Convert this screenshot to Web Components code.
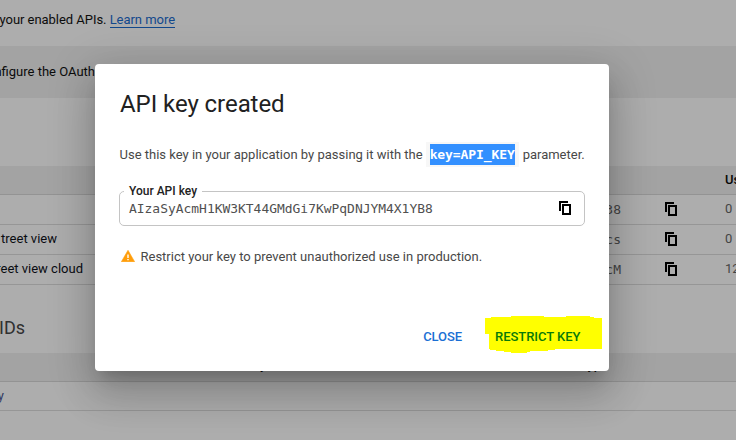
<!DOCTYPE html>
<html lang="en"><head><meta charset="utf-8"><title>API key created</title>
<style>html,body{margin:0;width:736px;height:440px;overflow:hidden;background:#adadad;font-family:Roboto,sans-serif}</style></head>
<body><credentials-app></credentials-app>
<script>
const define=(name,html)=>customElements.define(name,class extends HTMLElement{
  constructor(){super();const t=document.createElement('template');t.innerHTML=html;this.attachShadow({mode:'open'}).append(t.content.cloneNode(true));}
});
define('copy-icon',`<style>:host{display:block;width:12px;height:14px}svg{display:block}</style>
<svg width="12" height="14" viewBox="0 0 12 14" fill="none" stroke="#000" stroke-width="2" shape-rendering="crispEdges"><path d="M1 10V1H9"/><path d="M4 4H11V13H4Z"/></svg>`);
define('key-row',`<style>:host{box-sizing:border-box;display:flex;align-items:center;height:30px;padding-bottom:1px;border-bottom:1px solid #969696;font-size:13px;color:#0c0c0c}
.name{display:flex;justify-content:flex-end;white-space:nowrap;width:var(--w,83px);margin-right:auto;color:var(--nc,#0a0c12);padding-bottom:1px}
.key{font:13px "DejaVu Sans Mono",monospace;width:32px;display:flex;justify-content:flex-end;color:#444;margin-right:44px}
copy-icon{margin-right:48px;}
.use{width:11px;white-space:nowrap;color:#444;padding-bottom:1px}</style>
<span class="name"><slot name="name"></slot></span><span class="key"><slot name="key"></slot></span><copy-icon></copy-icon><span class="use"><slot name="use"></slot></span>`);
define('table-head',`<style>:host{display:flex;height:28px;border-bottom:1px solid #939393;background:#a3a3a3;font-size:13px;font-weight:500;color:#080808;line-height:var(--lh,27px);white-space:nowrap}</style><slot></slot>`);
define('credentials-page',`<style>:host{display:block;width:736px;height:440px;overflow:hidden;font-size:13px;color:#0c0c0c}
.intro{height:46px;line-height:40px;white-space:nowrap;letter-spacing:-.04px;text-indent:-.5px}.intro a{color:#12488c;border-bottom:1px solid #12488c}
.banner{height:52px;background:#a3a3a3;line-height:52px}.banner span,.ids span{display:flex;justify-content:flex-end;width:95px;white-space:nowrap}
.gap{height:68px}.ids{height:68px;font-size:18px;line-height:86px;color:#303030}.ids span{width:25px}
.usage{margin-left:725px}.date{margin-left:260px}.type{margin-left:321px}
.client{height:28px;border-bottom:1px solid #969696;line-height:28px;color:#323a62}.client span{display:flex;justify-content:flex-end;width:4px}</style>
<div class="intro">your enabled APIs. <a>Learn more</a></div>
<div class="banner"><span>nfigure the OAuth</span></div><div class="gap"></div>
<table-head><span class="usage">Us</span></table-head>
<key-row><span slot="key">38</span><span slot="use">0</span></key-row>
<key-row style="--w:57px"><span slot="name">treet view</span><span slot="key">cs</span><span slot="use">0</span></key-row>
<key-row><span slot="name">reet view cloud</span><span slot="key">cM</span><span slot="use">12</span></key-row>
<div class="ids"><span>IDs</span></div>
<table-head style="--lh:23px"><span class="date">y</span><span class="type">yp</span></table-head>
<div class="client"><span>y</span></div>`);
define('key-field',`<style>:host{display:block}
fieldset{box-sizing:border-box;display:flex;width:466px;height:42px;margin:0;border:1px solid #c4c4c4;border-radius:5px;padding:0 13px 0 9px;min-width:0}
legend{font-size:12px;font-weight:500;line-height:14px;padding:0 5px 0 5px;margin-left:-5px;color:#222;}
.in{display:flex;align-items:center;justify-content:space-between;width:100%;height:20px}
.v{font:12.95px "DejaVu Sans Mono",monospace;color:#505050;padding-top:1px}</style>
<fieldset><legend><slot name="label"></slot></legend><div class="in"><span class="v"><slot></slot></span><copy-icon></copy-icon></div></fieldset>`);
define('marked-button',`<style>:host{display:grid;width:117px;height:38px;font-size:13px;font-weight:500;color:#087a08}
svg,span{grid-area:1/1}span{padding:13px 0 0 10px;line-height:16px;letter-spacing:-.04px;white-space:nowrap}</style>
<svg width="118" height="38" viewBox="0 0 118 38"><path fill="#ff0" d="M0 2H6V1H26V0H59V1H81V0H105V1H109V2H117V33H70V34H63V35H45V36H42V37H26V36H19V35H11V34H5V33H4V18H0Z"/></svg><span><slot></slot></span>`);
define('key-dialog',`<style>:host{box-sizing:border-box;display:flex;flex-direction:column;width:514px;height:307px;padding:24px 24px 0;background:#fff;border-radius:4px;color:#484848;font-size:13px;
box-shadow:0 11px 15px -7px rgba(0,0,0,.2),0 24px 38px 3px rgba(0,0,0,.14),0 9px 46px 8px rgba(0,0,0,.12)}
h1{font-size:24px;font-weight:400;line-height:32px;margin:0 0 0 1px;color:#212121;letter-spacing:-.06px}
.use{height:26px;margin-top:21px;display:flex;align-items:center;white-space:nowrap;padding-left:.5px}
code{box-sizing:border-box;height:25px;border:1px solid #f7f7f7;background:#f7f7f7;padding:1px 3px;margin:0 4px 0 3px;font:bold 13px/21px "DejaVu Sans Mono",monospace;color:#fff}
code span{display:block;background:#3390ff;width:85px;letter-spacing:-.1px;line-height:21px}
key-field{margin-top:17px}
.warn{display:flex;align-items:center;gap:6px;height:20px;margin:20px 0 0 1.5px}
.actions{display:flex;margin-top:50px;justify-content:flex-end;margin-right:-17px}.close{font-size:13px;font-weight:500;color:#1a6fd4;line-height:16px;padding:13px 23px 0 0;letter-spacing:-.1px}</style>
<h1>API key created</h1>
<div class="use"><span>Use this key in your application by passing it with the</span><code><span>key=API_KEY</span></code><span>parameter.</span></div>
<key-field><span slot="label">Your API key</span>AIzaSyAcmH1KW3KT44GMdGi7KwPqDNJYM4X1YB8</key-field>
<div class="warn"><svg width="14" height="12" viewBox="0 0 14 12"><path d="M7 .3 13.6 11.7H.4Z" fill="#ff9d0a" stroke="#ff9d0a" stroke-width=".6" stroke-linejoin="round"/><path d="M6.3 4.5h1.4V8H6.3zM6.3 9h1.4v1.3H6.3z" fill="#fff"/></svg><span>Restrict your key to prevent unauthorized use in production.</span></div>
<div class="actions"><span class="close">CLOSE</span><marked-button>RESTRICT KEY</marked-button></div>`);
define('credentials-app',`<style>:host{display:grid;width:736px;height:440px;overflow:hidden}credentials-page,key-dialog{grid-area:1/1}key-dialog{margin:64px 0 0 95px;z-index:1}</style>
<credentials-page></credentials-page><key-dialog></key-dialog>`);
</script></body></html>
